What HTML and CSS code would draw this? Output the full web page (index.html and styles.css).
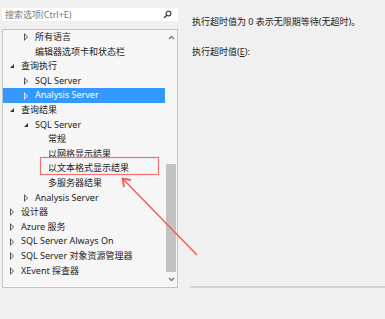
FILE: index.html
```html
<!DOCTYPE html>
<html lang="zh-CN">
<head>
  <meta charset="UTF-8">
  <title>选项</title>
  <link rel="stylesheet" href="styles.css">
</head>
<body>
  <div class="page">
    <div class="left">
      <div class="search">
        <span class="placeholder">搜索选项(Ctrl+E)</span>
        <svg class="search-icon" width="9" height="9" viewBox="0 0 9 9">
          <circle cx="5.5" cy="3.5" r="2.4" fill="none" stroke="#444" stroke-width="1.2"/>
          <line x1="3.7" y1="5.3" x2="1" y2="8" stroke="#444" stroke-width="1.5"/>
        </svg>
      </div>

      <div class="tree-panel">
        <div class="tree">
          <div class="row l1"><span class="tw closed"></span>所有语言</div>
          <div class="row l1"><span class="tw"></span>编辑器选项卡和状态栏</div>
          <div class="row l0"><span class="tw open"></span>查询执行</div>
          <div class="row l1"><span class="tw closed"></span>SQL Server</div>
          <div class="row l1 selected"><span class="tw closed"></span>Analysis Server</div>
          <div class="row l0"><span class="tw open"></span>查询结果</div>
          <div class="row l1"><span class="tw open"></span>SQL Server</div>
          <div class="row l2"><span class="tw"></span>常规</div>
          <div class="row l2"><span class="tw"></span>以网格显示结果</div>
          <div class="row l2"><span class="tw"></span>以文本格式显示结果</div>
          <div class="row l2"><span class="tw"></span>多服务器结果</div>
          <div class="row l1"><span class="tw closed"></span>Analysis Server</div>
          <div class="row l0"><span class="tw closed"></span>设计器</div>
          <div class="row l0"><span class="tw closed"></span>Azure 服务</div>
          <div class="row l0"><span class="tw closed"></span>SQL Server Always On</div>
          <div class="row l0"><span class="tw closed"></span>SQL Server 对象资源管理器</div>
          <div class="row l0"><span class="tw closed"></span>XEvent 探查器</div>
        </div>
        <div class="scrollbar">
          <div class="sb-btn">
            <svg width="7" height="5" viewBox="0 0 7 5"><polyline points="1,4 3.5,1.5 6,4" fill="none" stroke="#777" stroke-width="1.3"/></svg>
          </div>
          <div class="sb-track"><div class="sb-thumb"></div></div>
          <div class="sb-btn">
            <svg width="7" height="5" viewBox="0 0 7 5"><polyline points="1,1 3.5,3.5 6,1" fill="none" stroke="#777" stroke-width="1.3"/></svg>
          </div>
        </div>
      </div>
    </div>

    <div class="right">
      <p class="note">执行超时值为 0 表示无限期等待(无超时)。</p>
      <p class="label">执行超时值(<u>E</u>):</p>
      <div class="rule"></div>
    </div>
  </div>

  <svg class="annotation" width="385" height="319" viewBox="0 0 385 319">
    <rect x="40.5" y="157.5" width="118" height="17" fill="none" stroke="#f07272" stroke-width="1.2"/>
    <line x1="197" y1="255" x2="123" y2="179" stroke="#f05a5a" stroke-width="1.4"/>
    <polyline points="131,180 122.5,178.5 124,187" fill="none" stroke="#f05a5a" stroke-width="1.8"/>
  </svg>
</body>
</html>
```

FILE: styles.css
```css
body {
  margin: 0;
  background-color: #f0f0f0;
  font-family: "Noto Sans", "Noto Sans CJK SC", sans-serif;
  font-size: 9px;
  color: #222;
}
.page {
  display: flex;
  width: 385px;
  height: 319px;
}
.left {
  width: 176px;
  padding: 8px 0 0 2px;
}
.search {
  height: 13px;
  background-color: #fff;
  display: flex;
  align-items: center;
  justify-content: space-between;
  padding: 0 6px 0 3px;
}
.placeholder {
  color: #777;
  line-height: 13px;
}
.search-icon {
  display: block;
}
.tree-panel {
  margin-top: 8px;
  height: 257px;
  border: 1px solid #c4c4c4;
  background-color: #f6f6f6;
  display: flex;
}
.tree {
  flex: 1;
  overflow: hidden;
}
.row {
  height: 14.6px;
  line-height: 14.6px;
  display: flex;
  align-items: center;
  white-space: nowrap;
}
.row.l0 { padding-left: 5px; }
.row.l1 { padding-left: 19px; }
.row.l2 { padding-left: 32px; }
.row.selected {
  background-color: #3399ff;
  color: #fff;
}
.tw {
  width: 13px;
  height: 8px;
  position: relative;
  flex-shrink: 0;
}
.tw.closed::before {
  content: "";
  position: absolute;
  left: 2px;
  top: 0;
  border-style: solid;
  border-width: 4px 0 4px 4px;
  border-color: transparent transparent transparent #555;
}
.tw.closed::after {
  content: "";
  position: absolute;
  left: 3px;
  top: 2px;
  border-style: solid;
  border-width: 2px 0 2px 2px;
  border-color: transparent transparent transparent #f6f6f6;
}
.selected .tw.closed::before {
  border-color: transparent transparent transparent #dbeaff;
}
.selected .tw.closed::after {
  border-color: transparent transparent transparent #3399ff;
}
.tw.open::before {
  content: "";
  position: absolute;
  left: 2px;
  top: 2px;
  border-style: solid;
  border-width: 0 0 4px 4px;
  border-color: transparent transparent #333 transparent;
}
.scrollbar {
  width: 12px;
  display: flex;
  flex-direction: column;
}
.sb-btn {
  height: 15px;
  display: flex;
  align-items: center;
  justify-content: center;
}
.sb-btn svg {
  display: block;
}
.sb-track {
  flex: 1;
  display: flex;
  flex-direction: column;
  justify-content: flex-end;
}
.sb-thumb {
  height: 108px;
  margin: 0 1px;
  background-color: #c2c2c2;
}
.right {
  flex: 1;
  padding: 16px 0 0 14px;
  display: flex;
  flex-direction: column;
}
.note {
  margin: 0;
  line-height: 12px;
}
.label {
  margin: 18px 0 0;
  line-height: 12px;
}
.rule {
  margin-top: 228px;
  margin-left: -2px;
  height: 2px;
  background-color: #d2d2d2;
}
.annotation {
  position: absolute;
  top: 0;
  left: 0;
  pointer-events: none;
}
```
